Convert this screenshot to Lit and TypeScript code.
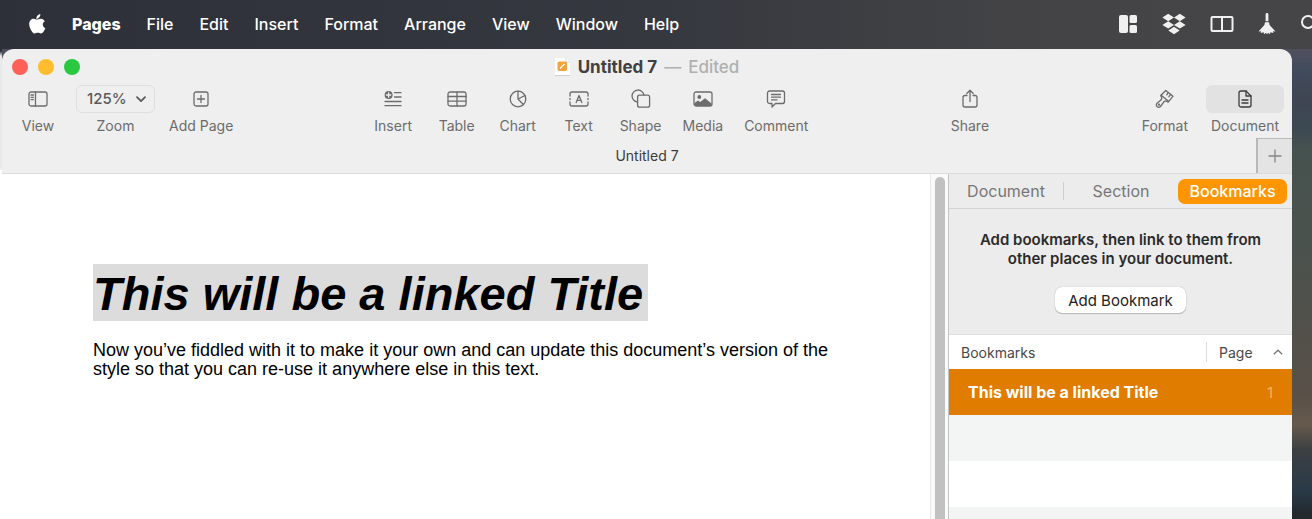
import { LitElement, html, css, nothing, TemplateResult } from "lit";
import { customElement, property } from "lit/decorators.js";

const icons: Record<string, TemplateResult> = {
  View: html`<svg width="20" height="16" viewBox="0 0 20 16"><rect x="1" y="1" width="18" height="14" rx="2"/><path d="M7.5 1v14M3 4h2.5M3 6.3h2.5M3 8.6h2.5"/></svg>`,
  AddPage: html`<svg width="16" height="16" viewBox="0 0 16 16"><rect x="1" y="1" width="14" height="14" rx="2"/><path d="M8 4.5v7M4.5 8h7"/></svg>`,
  Insert: html`<svg width="18" height="16" viewBox="0 0 18 16"><circle cx="4.6" cy="4" r="4" fill="currentColor" stroke="none"/><path d="M4.6 1.8v4.4M2.4 4h4.4" stroke="#efefef"/><path d="M10.5 1.7h6.5M10.5 6h6.5M1 10.5h16M1 14.7h16"/></svg>`,
  Table: html`<svg width="20" height="16" viewBox="0 0 20 16"><rect x="1" y="1" width="18" height="14" rx="2"/><path d="M1 5.5h18M1 10.2h18M10 1v14"/></svg>`,
  Chart: html`<svg width="18" height="18" viewBox="0 0 18 18"><circle cx="9" cy="9" r="7.8"/><path d="M9 1.2V9l5.3 5.5M9 9l7-3.5"/></svg>`,
  Text: html`<svg width="20" height="16" viewBox="0 0 20 16"><path d="M1 5V3a2 2 0 0 1 2-2h14a2 2 0 0 1 2 2v2M1 11v2a2 2 0 0 0 2 2h14a2 2 0 0 0 2-2v-2M1 7.5v1M19 7.5v1"/><path d="M7.2 11.5 10 4.5l2.8 7M8.1 9.3h3.8"/></svg>`,
  Shape: html`<svg width="20" height="20" viewBox="0 0 20 20"><path d="M6.5 13A6 6 0 1 1 13 6.2"/><rect x="6.6" y="6.2" width="12" height="12" rx="2"/></svg>`,
  Media: html`<svg width="20" height="16" viewBox="0 0 20 16"><rect x="1" y="1" width="18" height="14" rx="2"/><circle cx="6.3" cy="6" r="1.9" fill="currentColor" stroke="none"/><path d="M1.5 12 5 9.6l2.2 1.4L12 7.2l6.5 5.2V14l-1 1h-15l-1-1z" fill="currentColor" stroke="none"/></svg>`,
  Comment: html`<svg width="20" height="18" viewBox="0 0 20 18"><path d="M3.5 1h13a2 2 0 0 1 2 2v8.5a2 2 0 0 1-2 2h-7L6 17v-3.5H3.5a2 2 0 0 1-2-2V3a2 2 0 0 1 2-2z"/><path d="M5.5 4.500h9M5.500 7.200h9M5.500 9.900h5.500"/></svg>`,
  Share: html`<svg width="16" height="20" viewBox="0 0 16 20"><path d="M5 6.500H3a2 2 0 0 0-2 2V16a2 2 0 0 0 2 2h10a2 2 0 0 0 2-2V8.500a2 2 0 0 0-2-2h-2M8 12.500V1.500M4.800 4.500 8 1.300l3.200 3.200"/></svg>`,
  Format: html`<svg width="20" height="20" viewBox="0 0 20 20"><path d="M10.800 1.500 18 7.200l-4.800 6-2.400-1.300-1.600.4-3.700 5.200a2.400 2.400 0 0 1-3.700-3l4.700-4 .2-1.800-1-2.200z"/><path d="M6.500 6.500l7 5.800M13.300 3.500l-1.600 2.300M15.700 5.300l-1.800 2.400"/><circle cx="4" cy="15.700" r=".5"/></svg>`,
  Document: html`<svg width="16" height="18" viewBox="0 0 16 18"><path d="M4 1h5l5 5v9a2 2 0 0 1-2 2H4a2 2 0 0 1-2-2V3a2 2 0 0 1 2-2z"/><path d="M9 1v5h5M5 10h6M5 13h6"/></svg>`,
};

@customElement("tool-item")
export class ToolItem extends LitElement {
  @property() label = "";
  @property() icon = "";
  @property({ type: Boolean }) active = false;

  static styles = css`
    :host { display: block; }
    .tool {
      display: flex; flex-direction: column; align-items: center; gap: 4px;
      min-width: 100%; padding: 0; border: 0; background: none;
      font: 14px/18px Inter, "Liberation Sans", sans-serif; color: #6c6c6c; white-space: nowrap;
    }
    .icon { display: flex; align-items: center; justify-content: center; height: 28px; min-width: 100%; border-radius: 6px; }
    .active .icon { width: 78px; background: #e2e2e2; color: #3c3c3c; }
    svg { fill: none; stroke: currentColor; stroke-width: 1.3; stroke-linecap: round; stroke-linejoin: round; }
  `;

  render() {
    return html`<button class="tool ${this.active ? "active" : ""}">
      <span class="icon">${icons[this.icon || this.label] ?? nothing}</span>
      <span>${this.label}</span>
    </button>`;
  }
}

const menus = ["File", "Edit", "Insert", "Format", "Arrange", "View", "Window", "Help"];
const tools = ["Insert", "Table", "Chart", "Text", "Shape", "Media", "Comment"];

@customElement("app-root")
export class AppRoot extends LitElement {
  static styles = css`
    :host {
      display: flex; flex-direction: column; height: 100vh; overflow: hidden;
      font-family: Inter, "Liberation Sans", sans-serif;
      background:
        linear-gradient(#2d3038 51px, #e9e9e9 56px, #e9e9e9 169px, #fff 170px) left / 2px 100% no-repeat,
        linear-gradient(#50505e 49px, #404b5c 70px, #3f4552 100px, #3c4952 130px, #46524f 150px, #4b524d 250px, #54504a 350px, #5a5148 400px, #665a4c 425px, #3b3f42 450px, #2a3a48 490px, #22282c 515px);
    }
    button { font-family: inherit; border: 0; padding: 0; margin: 0; }
    .menubar {
      display: flex; align-items: center; box-sizing: border-box; height: 49px; flex: none; padding: 0 0 2px 28px;
      background: linear-gradient(90deg, #2d3038, #35383f 50%, #444446 80%, #454547); color: #fff;
    }
    .menus { display: flex; align-items: center; gap: 26px; flex: 1; }
    .menus button { background: none; color: inherit; font-size: 16px; line-height: 20px; font-weight: 500; white-space: nowrap; }
    .menus .app { font-weight: 800; }
    .apple { display: block; fill: #fff; }
    .status { display: flex; align-items: center; gap: 24px; overflow: hidden; color: #f0f0f0; }
    .status svg { display: block; flex: none; }
    .edge { width: 12px; overflow: hidden; }

    .window {
      flex: 1; min-height: 0; margin: 0 20px 0 2px; display: flex; flex-direction: column;
      background: #efefef; border-radius: 12px 12px 0 0; overflow: hidden;
    }
    .titlebar { display: grid; grid-template-columns: 1fr auto 1fr; align-items: center; box-sizing: border-box; height: 36px; padding: 0 10px 1px; }
    .lights { display: flex; gap: 10px; }
    .light { width: 16px; height: 16px; border-radius: 50%; }
    .close { background: #fe5f57; }
    .minimise { background: #febc2e; }
    .zoomlight { background: #28c840; }
    .title { display: flex; align-items: center; gap: 7px; font-size: 17px; line-height: 20px; color: #b0b0b0; font-weight: 500; }
    .title h1 { margin: 0; font-size: 17px; font-weight: 700; color: #404040; }
    .title svg { display: block; }

    .toolbar { display: flex; align-items: flex-start; height: 53px; padding: 0 8px 0 18px; }
    .group { display: flex; }
    .left { gap: 14px; }
    .middle { gap: 21px; }
    .middle tool-item { min-width: 40px; }
    .middle tool-item:first-child { min-width: 45px; }
    .right { gap: 18px; }
    .spacer { flex: 28; }
    .spacer.narrow { flex: 27; }
    .spacer.wide { flex: 30; }
    .view { min-width: 36px; margin-right: 6px; }
    .zoom { display: flex; flex-direction: column; align-items: center; gap: 4px; font-size: 14px; line-height: 18px; color: #6c6c6c; }
    .selectwrap { display: grid; align-items: center; }
    .selectwrap > * { grid-area: 1 / 1; }
    .selectwrap svg { justify-self: end; margin-right: 9px; pointer-events: none; }
    select {
      appearance: none; box-sizing: border-box; width: 79px; height: 28px; padding: 0 10px; margin: 0;
      border: 1px solid #dfdfdf; border-radius: 6px; background: none;
      font: 500 15px/20px Inter, "Liberation Sans", sans-serif; color: #5a5a5a;
    }

    .docbar { display: grid; grid-template-columns: 36px 1fr 36px; align-items: center; height: 35px; border-bottom: 1px solid #dcdcdc; text-align: center; font-size: 14px; color: #3c3c3c; }
    .docbar span { grid-column: 2; }
    .docbar button { display: grid; place-items: center; align-self: stretch; background: #e4e4e4; border-top: 1px solid #b8b8b8; border-left: 2px solid #b8b8b8; }

    .content { flex: 1; min-height: 0; display: flex; background: #fff; }
    .page { flex: 1; min-width: 0; padding: 90px 90px 0 91px; font-family: "Liberation Sans", Arial, sans-serif; color: #000; }
    .page h2 { display: flex; margin: 0; font-size: 47px; line-height: 54px; font-style: italic; font-weight: 700; white-space: nowrap; }
    mark { padding: 3px 5px 0 0; background: #dcdcdc; color: inherit; }
    .page p { margin: 20px 0 0; font-size: 18px; line-height: 19px; }
    .scroll { width: 18px; flex: none; display: flex; justify-content: center; padding-top: 3px; box-sizing: border-box; background: #fafafa; border-left: 1px solid #e8e8e8; }
    .thumb { width: 10px; border-radius: 5px 5px 0 0; background: #c1c1c1; }

    aside { width: 343px; flex: none; display: flex; flex-direction: column; border-left: 1px solid #c4c4c4; background: #ececec; }
    aside > * { flex: none; }
    .tabs { display: grid; grid-template-columns: 115px 1fr 109px; align-items: center; height: 34px; padding-right: 5px; border-bottom: 1px solid #d4d4d4; }
    .tabs button { height: 25px; background: none; font-size: 16px; line-height: 25px; color: #777; }
    .tabs .first { height: 18px; line-height: 18px; border-right: 1px solid #cfcfcf; }
    .tabs .on { border-radius: 7px; background: #ff9500; color: #fff; font-weight: 500; }
    .info { display: flex; flex-direction: column; align-items: center; gap: 19px; padding: 21px 20px; border-bottom: 1px solid #e0e0e0; text-align: center; }
    .info p { margin: 0; font-size: 15px; line-height: 19px; font-weight: 600; color: #2a2a2a; }
    .info button { height: 26px; padding: 0 13px; border-radius: 7px; background: #fff; box-shadow: 0 0 1px #0005, 0 1px 1px #0003; font-size: 15px; color: #222; }
    table { width: 100%; border-collapse: collapse; background: #fff; table-layout: fixed; }
    th { height: 34px; padding: 0 0 0 12px; text-align: left; font-size: 14px; font-weight: 400; color: #484848; }
    .pagecol { width: 86px; padding: 0; }
    .pagehead { display: flex; align-items: center; justify-content: space-between; height: 20px; padding: 0 9px 0 12px; border-left: 1px solid #dcdcdc; }
    td { height: 46px; padding: 0 19px; font-size: 16px; }
    .selected { background: #e07c00; color: #fff; font-weight: 700; }
    .selected td + td { text-align: right; font-size: 14px; font-weight: 400; color: #f5b568; }
    .stripe { background: #f3f5f4; }
  `;

  render() {
    return html`
      <header class="menubar">
        <nav class="menus" aria-label="Menu bar">
          <button aria-label="Apple"><svg class="apple" width="18" height="22" viewBox="0 0 18 22"><path d="M12.3 1c.2 1.5-.4 2.7-1.2 3.6-.7.8-1.7 1.4-2.7 1.3-.2-1.3.4-2.5 1.1-3.3C10.3 1.7 11.4 1.1 12.3 1zM16.8 8.2c-1.3.8-2 2-2 3.4 0 1.7 1 3 2.5 3.6-.4 1.2-1 2.3-1.7 3.3-.8 1.1-1.6 2-2.7 2-1.2 0-1.6-.7-3.1-.7s-2 .7-3.1.7c-1.1 0-2-1-2.8-2.1C2.3 16.4 1.2 13.6 1.2 11.1c0-3.5 2.2-5.4 4.5-5.4 1.3 0 2.4.9 3.3.9.8 0 2.1-.9 3.7-.9 1.6 0 3.1.8 4.1 2.5z"/></svg></button>
          <button class="app">Pages</button>
          ${menus.map((m) => html`<button>${m}</button>`)}
        </nav>
        <div class="status">
          <svg width="20" height="20" viewBox="0 0 20 20" fill="currentColor"><rect x="1" y="1" width="9" height="18" rx="2"/><rect x="11.5" y="1" width="7.5" height="8" rx="1.5"/><rect x="11.5" y="11" width="7.5" height="8" rx="1.5"/></svg>
          <svg width="24" height="22" viewBox="0 0 24 22" fill="currentColor"><path d="M6.2.8 12 4.5 6.2 8.2.4 4.5zM17.8.8l5.8 3.7-5.8 3.7L12 4.5zM6.2 8.2l5.8 3.7-5.8 3.7L.4 11.9zM17.8 8.2l5.8 3.7-5.8 3.7-5.8-3.7zM12 13.8l5.7 3.7-5.7 3.7-5.7-3.7z"/></svg>
          <svg width="24" height="18" viewBox="0 0 24 18" fill="none" stroke="currentColor" stroke-width="2"><rect x="1.5" y="2" width="21" height="14" rx="1"/><path d="M12 2v14"/></svg>
          <svg width="18" height="22" viewBox="0 0 18 22" fill="currentColor"><path d="M7.6 1.5a1.4 1.4 0 0 1 2.8 0V8.3H7.6zM7 9.3h4l.6 2.7 5.9 6.5-2.5-.2.3 1.7-3-.8-.3 2-2-1.4-1 1.7-1-1.7-2 1.4-.3-2-3 .8.3-1.7-2.5.2L6.4 12z"/></svg>
          <span class="edge"><svg width="20" height="20" viewBox="0 0 20 20" fill="none" stroke="currentColor" stroke-width="2"><circle cx="8" cy="8" r="6"/><path d="m12.5 12.5 6 6"/></svg></span>
        </div>
      </header>

      <main class="window">
        <div class="titlebar">
          <div class="lights"><button class="light close" aria-label="Close"></button><button class="light minimise" aria-label="Minimise"></button><button class="light zoomlight" aria-label="Full screen"></button></div>
          <div class="title">
            <svg width="16" height="18" viewBox="0 0 16 18"><path d="M0 0h11l4 4v14H0z" fill="#fff"/><path d="M0 17.5h15" stroke="#cfcfcf"/><path d="M11 0v4h4" fill="none" stroke="#d8d8d8"/><rect x="2.5" y="3.500" width="9.500" height="9.500" rx="2" fill="#f4a136"/><path d="m5 10.500 4.500-4.500" stroke="#fff" stroke-width="1.200"/></svg>
            <h1>Untitled 7</h1><span>—</span><span>Edited</span>
          </div>
        </div>

        <div class="toolbar">
          <div class="group left">
            <tool-item class="view" label="View"></tool-item>
            <div class="zoom">
              <div class="selectwrap">
                <select id="zoom"><option>125%</option></select>
                <svg width="10" height="7" viewBox="0 0 10 7" fill="none" stroke="#5a5a5a" stroke-width="1.8" stroke-linecap="round" stroke-linejoin="round"><path d="m1 1.200 4 4 4-4"/></svg>
              </div>
              <label for="zoom">Zoom</label>
            </div>
            <tool-item label="Add Page" icon="AddPage"></tool-item>
          </div>
          <div class="spacer narrow"></div>
          <div class="group middle">${tools.map((t) => html`<tool-item label=${t}></tool-item>`)}</div>
          <div class="spacer"></div>
          <tool-item label="Share"></tool-item>
          <div class="spacer wide"></div>
          <div class="group right"><tool-item label="Format"></tool-item><tool-item label="Document" active></tool-item></div>
        </div>

        <div class="docbar">
          <span>Untitled 7</span>
          <button aria-label="New tab"><svg width="14" height="14" viewBox="0 0 14 14" stroke="#858585" stroke-width="1.3"><path d="M7 .5v13M.5 7h13"/></svg></button>
        </div>

        <div class="content">
          <article class="page">
            <h2><mark>This will be a linked Title</mark></h2>
            <p>Now you’ve fiddled with it to make it your own and can update this document’s version of the style so that you can re-use it anywhere else in this text.</p>
          </article>
          <div class="scroll"><div class="thumb"></div></div>
          <aside>
            <div class="tabs"><button class="first">Document</button><button>Section</button><button class="on">Bookmarks</button></div>
            <div class="info">
              <p>Add bookmarks, then link to them from other places in your document.</p>
              <button>Add Bookmark</button>
            </div>
            <table>
              <thead><tr><th>Bookmarks</th><th class="pagecol"><div class="pagehead">Page<svg width="10" height="6" viewBox="0 0 10 6" fill="none" stroke="#777" stroke-width="1.3"><path d="m.8 5.200 4.200-4 4.200 4"/></svg></div></th></tr></thead>
              <tbody>
                <tr class="selected"><td>This will be a linked Title</td><td>1</td></tr>
                <tr class="stripe"><td></td><td></td></tr>
                <tr><td></td><td></td></tr>
                <tr class="stripe"><td></td><td></td></tr>
              </tbody>
            </table>
          </aside>
        </div>
      </main>
    `;
  }
}
